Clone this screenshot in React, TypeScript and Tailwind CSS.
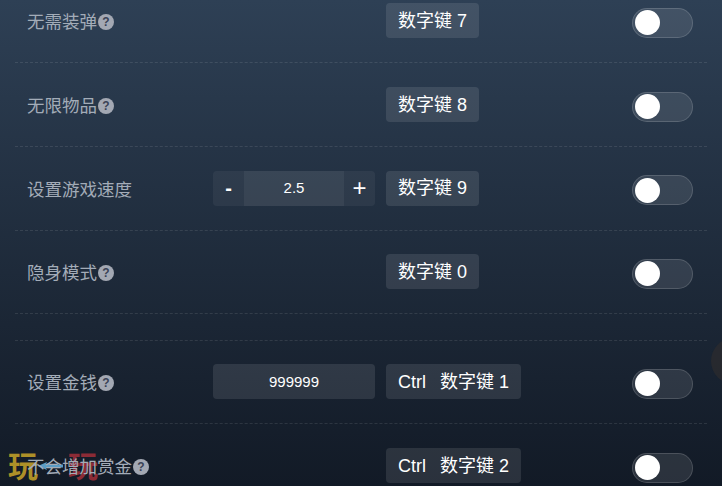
import React from "react";

const cjk = "font-['Liberation_Sans','Noto_Sans_CJK_SC',sans-serif]";

function Help() {
  return (
    <span className="ml-px inline-flex h-4 w-4 items-center justify-center rounded-full bg-[#a3a8b3] text-[12px] leading-none font-bold text-[#3a4256]">
      ?
    </span>
  );
}

function Hotkey({ ctrl, name }: { ctrl?: boolean; name: string }) {
  return (
    <div className="flex h-[35px] items-center rounded bg-white/10 px-3 text-[18px] leading-none text-white">
      {ctrl && <span className="mr-[14px]">Ctrl</span>}
      <span>{name}</span>
    </div>
  );
}

function Toggle() {
  return (
    <div className="mt-1 flex h-[30px] w-[61px] items-center rounded-full border border-white/15 bg-white/10 pl-[2px]">
      <div className="h-[25px] w-[25px] rounded-full bg-white" />
    </div>
  );
}

function Row({ label, help, hotkey, ctrl, children }: {
  label: string;
  help?: boolean;
  hotkey: string;
  ctrl?: boolean;
  children?: React.ReactNode;
}) {
  return (
    <div className="flex h-[83.7px] items-center border-b border-dashed border-white/10 pl-3 pr-[14px]">
      <div className="mt-[3px] flex w-[186px] items-center text-[17.5px] text-[#a3acb8]">
        {label}
        {help && <Help />}
      </div>
      <div className="w-[173px]">{children}</div>
      <Hotkey ctrl={ctrl} name={hotkey} />
      <div className="ml-auto">
        <Toggle />
      </div>
    </div>
  );
}

export default function App() {
  return (
    <div className={`relative h-[486px] w-[722px] overflow-hidden bg-gradient-to-b from-[#2e4055] to-[#121a26] px-[15px] ${cjk}`}>
      {/* watermark logo, sits under the rows */}
      <div className="absolute top-[448px] left-[8px] flex h-[32px] w-[96px] items-center font-['Noto_Sans_CJK_SC',serif] text-[30px] leading-none font-bold">
        <span className="text-[#ad9028]">玩</span>
        <svg viewBox="0 0 25 8" className="mt-1 h-2 w-[25px] shrink-0">
          <path d="M0 4 L9 0 L8 2 L25 2.5 L25 5.5 L8 6 L9 8 Z" fill="#5b9cc6" />
        </svg>
        <span className="ml-[5px] text-[#8c2b36]">玩</span>
      </div>

      <div className="relative -mt-[20.5px]">
        <Row label="无需装弹" help hotkey="数字键 7" />
        <Row label="无限物品" help hotkey="数字键 8" />
        <Row label="设置游戏速度" hotkey="数字键 9">
          <div className="flex h-[35px] w-[162px] items-center rounded bg-white/5 text-white">
            <span className="w-[31px] text-center text-[20px] font-bold">-</span>
            <span className="flex h-full w-[100px] items-center justify-center bg-white/5 text-[15px]">2.5</span>
            <span className="w-[31px] text-center text-[24px] leading-none">+</span>
          </div>
        </Row>
        <Row label="隐身模式" help hotkey="数字键 0" />
        <div className="h-[26.3px] border-b border-dashed border-white/10" />
        <Row label="设置金钱" help hotkey="数字键 1" ctrl>
          <div className="flex h-[35px] w-[162px] items-center justify-center rounded bg-white/10 text-[15px] text-white">
            999999
          </div>
        </Row>
        <Row label="不会增加赏金" help hotkey="数字键 2" ctrl />
      </div>

      {/* side handle, half hidden at the right edge */}
      <div className="absolute top-[338px] left-[711px] h-[46px] w-[46px] rounded-full bg-[#2a2a2e]/80" />
    </div>
  );
}
